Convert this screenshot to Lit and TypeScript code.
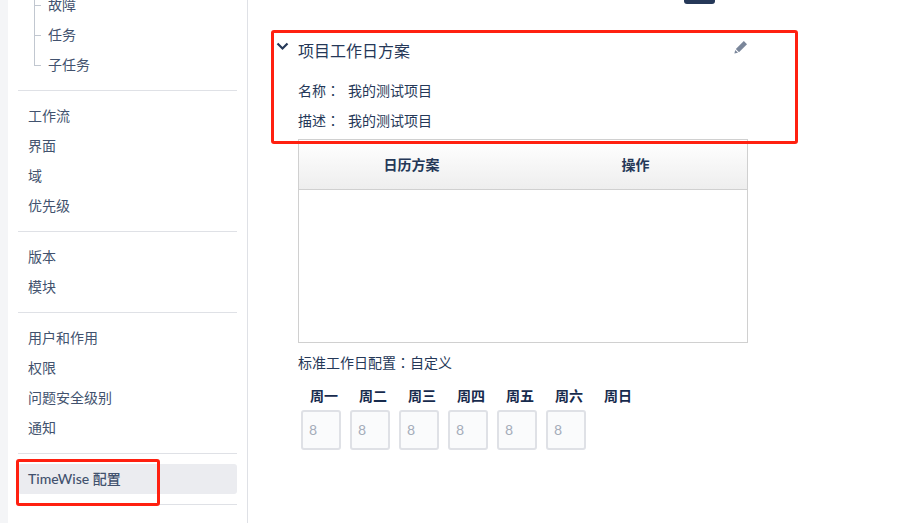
import { LitElement, html, css } from "lit";
import { customElement } from "lit/decorators.js";

const groups = [
  ["工作流", "界面", "域", "优先级"],
  ["版本", "模块"],
  ["用户和作用", "权限", "问题安全级别", "通知"],
];
const days = ["周一", "周二", "周三", "周四", "周五", "周六", "周日"];

@customElement("app-root")
export class AppRoot extends LitElement {
  static styles = css`
    :host {
      display: block;
      width: 917px;
      height: 523px;
      position: relative;
      overflow: hidden;
      background: #fff;
      font-family: "Noto Sans CJK SC", sans-serif;
      font-size: 14px;
      color: #172b4d;
    }
    .page { display: flex; height: 523px; }
    .strip { width: 8px; background: #f4f5f7; flex: none; }
    .side {
      width: 240px;
      flex: none;
      box-sizing: border-box;
      border-right: 1px solid #dfe1e6;
      padding: 0 10px;
      color: #42526e;
      overflow: hidden;
    }
    .group { padding: 10px 0; border-bottom: 1px solid #dfe1e6; }
    .tree { margin-top: -20px; }
    .row {
      height: 30px;
      line-height: 28px;
      padding-left: 10px;
      border-radius: 3px;
      white-space: nowrap;
    }
    .row.active {
      background: #ebecf0;
      line-height: 30px;
      font-family: Lato, "Noto Sans CJK SC", sans-serif;
      font-weight: 500;
    }
    .sub { position: relative; padding-left: 30px; }
    .sub::before {
      content: "";
      position: absolute;
      left: 16px;
      top: 0;
      width: 6px;
      height: 15px;
      border-left: 1px solid #c1c7d0;
      border-bottom: 1px solid #c1c7d0;
    }
    .sub:not(:last-child)::after {
      content: "";
      position: absolute;
      left: 16px;
      top: 16px;
      height: 14px;
      border-left: 1px solid #c1c7d0;
    }
    .main { flex: 1; padding-left: 50px; position: relative; }
    .topbar { height: 31px; display: flex; }
    .topbtn {
      width: 31px;
      height: 4px;
      margin-left: 386px;
      background: #253858;
      border-radius: 0 0 3px 3px;
    }
    .head { display: flex; align-items: flex-start; height: 40px; width: 450px; position: relative; }
    .title { font-size: 16px; line-height: 38px; flex: 1; color: #253858; }
    .chev { position: absolute; left: -22px; top: 11px; width: 13px; height: 9px; }
    .pencil { position: absolute; left: 436px; top: 9px; width: 14px; height: 14px; }
    .metas { height: 68px; box-sizing: border-box; padding-top: 4px; }
    .meta { display: flex; height: 30px; line-height: 30px; font-size: 14px; color: #253858; }
    .k { width: 50px; }
    .colon { font-family: "Noto Sans CJK TC", sans-serif; }
    table {
      width: 450px;
      height: 204px;
      box-sizing: border-box;
      border: 1px solid #d0d0d0;
      border-collapse: separate;
      border-spacing: 0;
      table-layout: fixed;
    }
    th {
      height: 50px;
      padding: 0 0 2px 1px;
      box-sizing: border-box;
      font-size: 14px;
      font-weight: 700;
      color: #253858;
      background: linear-gradient(#ffffff, #eeeeee);
      border-bottom: 1px solid #d0d0d0;
    }
    .std { height: 20px; line-height: 18px; font-size: 14px; margin-top: 10px; color: #253858; }
    .days { display: flex; margin-top: 13px; padding-left: 3px; gap: 9px; }
    .day { width: 40px; }
    .lbl {
      text-align: center;
      font-weight: 700;
      font-size: 14px;
      line-height: 18px;
      height: 20px;
      margin-left: 3px;
      width: 40px;
      color: #172b4d;
    }
    .box {
      margin-top: 4px;
      width: 40px;
      height: 40px;
      box-sizing: border-box;
      border: 2px solid #dfe1e6;
      border-radius: 3px;
      background: #fafbfc;
      color: #a5adba;
      font-family: Lato, sans-serif;
      font-size: 14px;
      line-height: 36px;
      padding-left: 6px;
    }
    .mark { position: absolute; box-sizing: border-box; border: 3px solid #ff2010; border-radius: 3px; }
    .m1 { left: 271px; top: 30px; width: 527px; height: 114px; }
    .m2 { left: 16px; top: 459px; width: 144px; height: 47px; }
  `;

  render() {
    const colon = html`<span class="colon">：</span>`;
    return html`
      <div class="page">
        <div class="strip"></div>
        <nav class="side">
          <div class="group tree">
            ${["故障", "任务", "子任务"].map((t) => html`<div class="row sub">${t}</div>`)}
          </div>
          ${groups.map(
            (g) => html`<div class="group">${g.map((t) => html`<div class="row">${t}</div>`)}</div>`
          )}
          <div class="group"><div class="row active">TimeWise 配置</div></div>
        </nav>
        <main class="main">
          <div class="topbar"><div class="topbtn"></div></div>
          <div class="head">
            <svg class="chev" viewBox="0 0 13 9">
              <path d="M1.5 1.5 6.5 6.5 11.5 1.5" fill="none" stroke="#253858" stroke-width="2.2" />
            </svg>
            <div class="title">项目工作日方案</div>
            <svg class="pencil" viewBox="0 0 14 14">
              <path d="M9.8 1 13 4.2 5 12.2 1.8 9Z" fill="#7a869a" />
              <path d="M1.3 10 4 12.7 0.4 13.6Z" fill="#7a869a" />
            </svg>
          </div>
          <div class="metas">
            <div class="meta"><span class="k">名称${colon}</span><span>我的测试项目</span></div>
            <div class="meta"><span class="k">描述${colon}</span><span>我的测试项目</span></div>
          </div>
          <table>
            <thead><tr><th>日历方案</th><th>操作</th></tr></thead>
            <tbody><tr><td></td><td></td></tr></tbody>
          </table>
          <div class="std">标准工作日配置${colon}自定义</div>
          <div class="days">
            ${days.map(
              (d, i) => html`<div class="day">
                <div class="lbl">${d}</div>
                ${i < 6 ? html`<div class="box">8</div>` : ""}
              </div>`
            )}
          </div>
        </main>
      </div>
      <div class="mark m1"></div>
      <div class="mark m2"></div>
    `;
  }
}
